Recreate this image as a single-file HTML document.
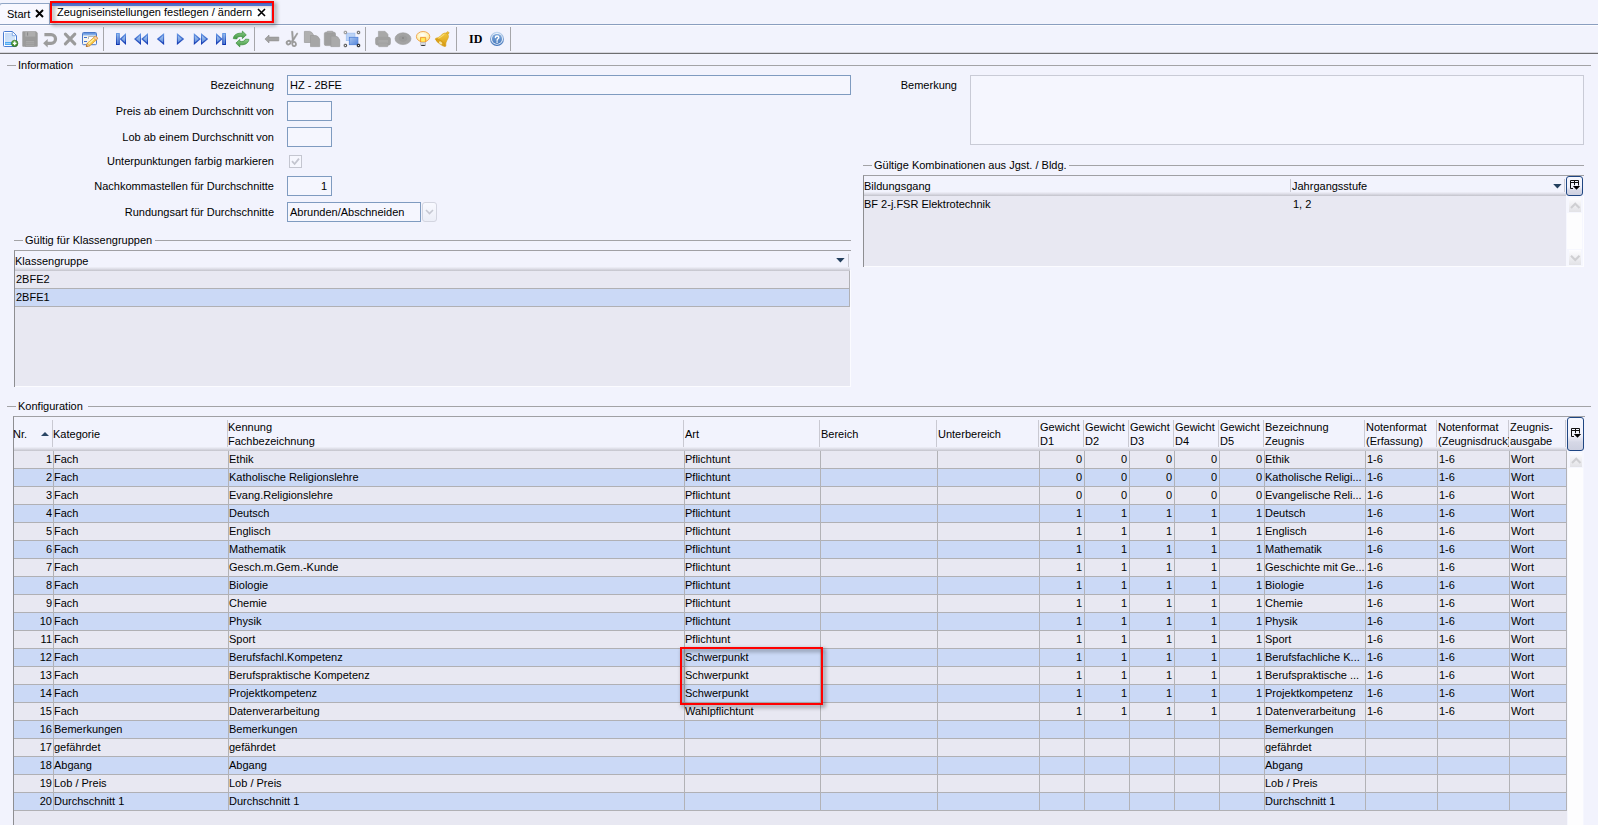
<!DOCTYPE html><html lang="de"><head><meta charset="utf-8"><title>Zeugniseinstellungen festlegen / ändern</title><style>
*{box-sizing:border-box;margin:0;padding:0}
html,body{width:1598px;height:825px;overflow:hidden;background:#f2f3fd}
body{position:relative;font-family:"Liberation Sans",sans-serif;font-size:11px;color:#000;line-height:14px}
.a{position:absolute}
.t{position:absolute;white-space:nowrap;height:14px;line-height:14px}
.r{text-align:right}
.hl{position:absolute;height:1px;background:#a3a3a6}
.vl{position:absolute;width:1px;background:#b2b2b6}
.inp{position:absolute;border:1px solid #7f9bc0;background:#f5f6fe}
.grid{position:absolute;background:#e8e8f2}
.row{position:absolute;left:0;height:18px;border-bottom:1px solid #b0b0b4}
.alt{background:#cbd9f6}

.hs{position:absolute;width:1px;background:#c9c9d2}
.redbox{position:absolute;border:2px solid #ff0000;filter:drop-shadow(2px 2px 2px rgba(0,0,0,.55))}
.grp{position:absolute;background:#f2f3fd;padding:0 2px;height:14px;line-height:14px;white-space:nowrap}
svg{position:absolute;overflow:visible}
</style></head><body>
<!--TABS-->
<div class="a" style="left:0;top:24px;width:1598px;height:1px;background:#8a9ebf"></div>
<div class="a" style="left:0;top:25px;width:1598px;height:1px;background:#fcfcff"></div>
<div class="a" style="left:-1px;top:3px;width:51px;height:21px;border:1px solid #8fa5c6;border-bottom:none;border-radius:3px 0 0 0;background:#f8f8ff"></div>
<div class="t " style="left:7px;top:7px;">Start</div>
<svg style="left:35px;top:9px" width="9" height="9" viewBox="0 0 9 9"><path d="M1 1L8 8M8 1L1 8" stroke="#000" stroke-width="1.9" fill="none"/></svg>
<div class="a" style="left:52px;top:3px;width:220px;height:18px;background:#fff"></div>
<div class="t " style="left:57px;top:5px;">Zeugniseinstellungen festlegen / ändern</div>
<svg style="left:257px;top:8px" width="9" height="9" viewBox="0 0 9 9"><path d="M1 1L8 8M8 1L1 8" stroke="#000" stroke-width="1.6" fill="none"/></svg>
<div class="redbox" style="left:50px;top:1px;width:224px;height:22px"></div>
<div class="a" style="left:271px;top:6px;width:1px;height:15px;background:#b4cbe8"></div>
<div class="a" style="left:52px;top:3px;width:220px;height:3px;background:linear-gradient(#4665ba 0,#4665ba 33%,#5274cc 34%,#5577ce 100%)"></div>
<!--TOOLBAR-->
<div class="a" style="left:0;top:53px;width:1598px;height:1px;background:#6e6e70"></div>
<div class="a" style="left:0;top:52px;width:1598px;height:1px;background:#d6d6de"></div>
<div class="a" style="left:103px;top:27px;width:1px;height:24px;background:#a6a6aa"></div>
<div class="a" style="left:254px;top:27px;width:1px;height:24px;background:#a6a6aa"></div>
<div class="a" style="left:365px;top:27px;width:1px;height:24px;background:#a6a6aa"></div>
<div class="a" style="left:456px;top:27px;width:1px;height:24px;background:#a6a6aa"></div>
<div class="a" style="left:510px;top:27px;width:1px;height:24px;background:#a6a6aa"></div>
<svg style="left:0;top:0" width="520" height="54" viewBox="0 0 520 54"><defs><linearGradient id="gb" x1="0" y1="0" x2="0" y2="1"><stop offset="0" stop-color="#6b9ee8"/><stop offset="1" stop-color="#0a2fae"/></linearGradient><linearGradient id="gbi" x1="0" y1="0" x2="0" y2="1"><stop offset="0" stop-color="#a9c9f1"/><stop offset="1" stop-color="#6e9ce0"/></linearGradient><linearGradient id="gpg" x1="0" y1="0" x2="1" y2="1"><stop offset="0" stop-color="#c3d9f6"/><stop offset="1" stop-color="#dcebfb"/></linearGradient><radialGradient id="ggr" cx=".4" cy=".35" r=".7"><stop offset="0" stop-color="#7fc46a"/><stop offset="1" stop-color="#2f7a1e"/></radialGradient><linearGradient id="ggn" x1="0" y1="0" x2="0" y2="1"><stop offset="0" stop-color="#8fd08c"/><stop offset="1" stop-color="#3f9640"/></linearGradient><linearGradient id="gtl" x1="0" y1="0" x2="0" y2="1"><stop offset="0" stop-color="#5f8fdc"/><stop offset="1" stop-color="#9fc2f0"/></linearGradient><linearGradient id="gsq" x1="0" y1="0" x2="1" y2="1"><stop offset="0" stop-color="#a9c6f1"/><stop offset="1" stop-color="#5585da"/></linearGradient><radialGradient id="gbu" cx=".45" cy=".35" r=".65"><stop offset="0" stop-color="#ffffff"/><stop offset=".6" stop-color="#fff3b8"/><stop offset="1" stop-color="#ffd878"/></radialGradient><linearGradient id="gbl" x1="0" y1="0" x2="1" y2="1"><stop offset="0" stop-color="#f7d24a"/><stop offset="1" stop-color="#d99a12"/></linearGradient><linearGradient id="ghp" x1="0" y1="0" x2="0" y2="1"><stop offset="0" stop-color="#7fa8da"/><stop offset="1" stop-color="#4b7dc0"/></linearGradient><linearGradient id="gpn" x1="0" y1="0" x2="1" y2="1"><stop offset="0" stop-color="#fff27a"/><stop offset="1" stop-color="#f2b530"/></linearGradient><linearGradient id="ghr" x1="0" y1="0" x2="0" y2="1"><stop offset="0" stop-color="#c0d6f0"/><stop offset="1" stop-color="#3f73ba"/></linearGradient></defs><path d="M4.5 31.5H12.5L16.5 35.5V45.5Q16.5 46.5 15.5 46.5H4.5Q3.5 46.5 3.5 45.5V32.5Q3.5 31.5 4.5 31.5Z" fill="#fbfdff" stroke="#4a7dd2" stroke-width="1"/><path d="M5 33H12L15 36V45H5Z" fill="url(#gpg)"/><path d="M12.3 31.8V35.7H16.2" fill="#f4f9ff" stroke="#6f9be0" stroke-width=".8"/><rect x="5" y="42" width="7" height="3" fill="#4fa9f2"/><rect x="5.5" y="43" width="5" height="1" fill="#9fd2fa"/><circle cx="14.7" cy="43.4" r="3.2" fill="url(#ggr)" stroke="#2c6d18" stroke-width=".6"/><path d="M12.9 43.4H16.5M14.7 41.6V45.2" stroke="#fff" stroke-width="1.3"/><path d="M23 31.3H36L37.7 33V46Q37.7 46.7 37 46.7H23Q22.3 46.7 22.3 46V32Q22.3 31.3 23 31.3Z" fill="#9b9b9b"/><rect x="25.3" y="31.6" width="10" height="5" fill="#aeaeae"/><rect x="27" y="32.4" width="1.1" height="3.2" fill="#8a8a8a"/><rect x="25.3" y="40.8" width="9.4" height="5.4" fill="#a9a9a9" stroke="#939393" stroke-width=".5"/><path d="M26 42.8H34M26 44.6H34" stroke="#989898" stroke-width=".7"/><path d="M44.4 34.6H51.1A4.4 4.4 0 0 1 51.1 43.4H47" fill="none" stroke="#9c9c9c" stroke-width="3.3"/><path d="M43.1 43.3L47.7 38.9V47.6Z" fill="#9c9c9c"/><path d="M65.4 34.2L74.8 43.8M74.8 34.2L65.4 43.8" stroke="#9b9b9b" stroke-width="3.1" stroke-linecap="round"/><rect x="82.5" y="32.5" width="14" height="12.2" rx="1" fill="#f6f4ec" stroke="#4a78c8" stroke-width="1"/><rect x="83" y="33" width="13" height="2.6" fill="url(#gtl)"/><path d="M84 37.5H87M84 41.5H87" stroke="#3f6fd0" stroke-width="1.1"/><path d="M88.5 39V36.5H95" fill="none" stroke="#a8a8a8" stroke-width=".8"/><rect x="89" y="37" width="6.5" height="6" fill="#fdfdfd"/><g transform="translate(86.3 46.5) rotate(-41.5) scale(.94)"><path d="M0 0L3.2 -1.9H13.6Q15 -1.9 15 0Q15 1.9 13.6 1.9H3.2Z" fill="url(#gpn)" stroke="#d88a1c" stroke-width=".7"/><path d="M0 0L3.2 -1.9V1.9Z" fill="#f3cfa0" stroke="#c77a20" stroke-width=".5"/><path d="M0 0L1.3 -.8V.8Z" fill="#4a2a08"/><path d="M12.2 -1.9H13.6Q15 -1.9 15 0Q15 1.9 13.6 1.9H12.2Z" fill="#f7c9b0" stroke="#d88a1c" stroke-width=".5"/><path d="M3.5 -.6H12" stroke="#fffbd0" stroke-width=".9"/></g><rect x="116" y="33" width="3.8" height="12" fill="url(#gb)"/><rect x="117" y="34" width="1.7" height="10" fill="url(#gbi)" opacity=".7"/><path d="M119.6 39L126 33V45Z" fill="url(#gb)"/><path d="M121.6 39L125 35.8V42.2Z" fill="url(#gbi)" opacity=".9"/><path d="M134 39L141 33V45Z" fill="url(#gb)"/><path d="M136 39L140 35.6V42.4Z" fill="url(#gbi)" opacity=".9"/><path d="M141.2 39L148 33V45Z" fill="url(#gb)"/><path d="M143.2 39L147 35.6V42.4Z" fill="url(#gbi)" opacity=".9"/><path d="M156.8 39L164.1 33V45Z" fill="url(#gb)"/><path d="M158.9 39L163.1 35.5V42.5Z" fill="url(#gbi)" opacity=".9"/><path d="M184.2 39L176.9 33V45Z" fill="url(#gb)"/><path d="M182 39L177.9 35.5V42.5Z" fill="url(#gbi)" opacity=".9"/><path d="M200.8 39L193.8 33V45Z" fill="url(#gb)"/><path d="M198.8 39L194.8 35.6V42.4Z" fill="url(#gbi)" opacity=".9"/><path d="M208.2 39L201 33V45Z" fill="url(#gb)"/><path d="M206.2 39L202 35.6V42.4Z" fill="url(#gbi)" opacity=".9"/><path d="M222.6 39L216 33V45Z" fill="url(#gb)"/><path d="M220.6 39L217 35.8V42.2Z" fill="url(#gbi)" opacity=".9"/><rect x="222.2" y="33" width="3.8" height="12" fill="url(#gb)"/><rect x="223.3" y="34" width="1.7" height="10" fill="url(#gbi)" opacity=".7"/><path d="M233.3 38.6C233.6 35 237 33.2 240.5 33.2H242.4V31.1L246.3 34.9L242.4 38.6V36.5H240.5C238.6 36.5 237.3 37.2 236.8 38.9Z" fill="url(#ggn)" stroke="#3a8c3a" stroke-width=".7" stroke-linejoin="round"/><path d="M248.9 39.4C248.6 43 245.2 44.8 241.7 44.8H239.8V46.9L235.9 43.1L239.8 39.4V41.5H241.7C243.6 41.5 244.9 40.8 245.4 39.1Z" fill="url(#ggn)" stroke="#3a8c3a" stroke-width=".7" stroke-linejoin="round"/><path d="M264.9 39L269 35V37.1H278.8V40.9H269V43Z" fill="#a2a2a2" stroke="#8f8f8f" stroke-width=".6" stroke-linejoin="round"/><path d="M291.4 31.3H293L293.6 41.5H292.2ZM297 32.8L298 33.6L292.6 42.4L291 41.6Z" fill="#9b9b9b" stroke="#9b9b9b" stroke-width=".4" stroke-linejoin="round"/><ellipse cx="288.6" cy="42.6" rx="2" ry="1.7" transform="rotate(-35 288.6 42.6)" fill="none" stroke="#9b9b9b" stroke-width="1.8"/><ellipse cx="294.1" cy="44" rx="1.8" ry="2.1" transform="rotate(-10 294.1 44)" fill="none" stroke="#9b9b9b" stroke-width="1.8"/><path d="M304.4 31.4H309.79999999999995Q312.4 32.0 313.59999999999997 35.199999999999996V42.5H304.4Z" fill="#b0b0b0" stroke="#999" stroke-width=".7" stroke-linejoin="round"/><path d="M310.5 35.5H315.9Q318.5 36.1 319.7 39.3V46.6H310.5Z" fill="#a6a6a6" stroke="#999" stroke-width=".7" stroke-linejoin="round"/><rect x="324.3" y="32.2" width="11.2" height="13.4" rx="1.6" fill="#9f9f9f" stroke="#979797" stroke-width=".6"/><rect x="327" y="31.2" width="6" height="2.4" rx=".8" fill="#a9a9a9" stroke="#979797" stroke-width=".5"/><path d="M330.9 36.1H335.9Q338.5 36.7 339.7 39.9V46.6H330.9Z" fill="#aaaaaa" stroke="#999" stroke-width=".7" stroke-linejoin="round"/><rect x="346.3" y="33.2" width="8.6" height="7.4" fill="#bcd3f5" stroke="#9fc0f2" stroke-width=".8"/><rect x="349.3" y="37.3" width="8.6" height="7.4" fill="url(#gsq)" stroke="#4f80d8" stroke-width=".8"/><rect x="344.2" y="31.3" width="2.4" height="2.4" rx=".5" fill="#f4f4f4" stroke="#8c8c8c" stroke-width="1"/><rect x="357.3" y="31.3" width="2.4" height="2.4" rx=".5" fill="#f4f4f4" stroke="#5a5a5a" stroke-width="1"/><rect x="344.2" y="44.3" width="2.4" height="2.4" rx=".5" fill="#f4f4f4" stroke="#454545" stroke-width="1"/><rect x="357.3" y="44.3" width="2.4" height="2.4" rx=".5" fill="#f4f4f4" stroke="#050505" stroke-width="1"/><path d="M378.4 31.3H385L388 34.3V38H378.4Z" fill="#a8a8a8" stroke="#9a9a9a" stroke-width=".5"/><rect x="375.2" y="36.8" width="15.6" height="8.6" rx="2.6" fill="#a0a0a0"/><rect x="378.4" y="40" width="9.6" height="3" fill="#a9a9a9"/><rect x="378.4" y="43" width="9.6" height="3.7" rx=".8" fill="#a6a6a6" stroke="#999" stroke-width=".4"/><ellipse cx="403" cy="38.7" rx="8" ry="5.9" fill="#a3a3a3" stroke="#9a9a9a" stroke-width=".6"/><ellipse cx="403" cy="38.6" rx="4.2" ry="3.1" fill="#9c9c9c"/><circle cx="403" cy="38" r=".9" fill="#858585"/><ellipse cx="423.1" cy="36.7" rx="6.7" ry="5.2" fill="url(#gbu)" stroke="#eea04a" stroke-width=".9"/><path d="M420.5 37.4H425.7V42H420.5Z" fill="#ffd83a" stroke="#f08e2c" stroke-width=".8"/><rect x="421.4" y="38.2" width="3.4" height="3.2" fill="#ffee62"/><path d="M420.2 42.2H426V44.8Q426 46 423.1 46Q420.2 46 420.2 44.8Z" fill="#b9bcc2"/><rect x="421" y="43.3" width="4.2" height="1.2" fill="#e9eaee"/><path d="M420.6 45H425.6Q425.4 46.1 423.1 46.1Q420.8 46.1 420.6 45Z" fill="#2e2e2e"/><g transform="translate(443.3 38.8) rotate(37) scale(.92)"><path d="M0 -6.9C-2.7 -6.9 -3.7 -4.7 -4 -2.4C-4.3 .4 -4.9 2.5 -6.7 4.2C-7.3 4.9 -6.8 5.9 -5.7 5.9H5.7C6.8 5.9 7.3 4.9 6.7 4.2C4.9 2.5 4.3 .4 4 -2.4C3.7 -4.7 2.7 -6.9 0 -6.9Z" fill="url(#gbl)" stroke="#d9a018" stroke-width=".6"/><circle cx="0" cy="-8" r="1.3" fill="#f0c63c" stroke="#cf9612" stroke-width=".6"/><ellipse cx="0" cy="5" rx="6" ry="1.9" fill="#dca41c" stroke="#c98e14" stroke-width=".4"/><ellipse cx="0.3" cy="5.3" rx="2" ry="1.3" fill="#f7e6a6"/><path d="M-2.2 -4.6C-2.6 -1.6 -3.2 .8 -4.8 2.8" stroke="#fbe27e" stroke-width="1.2" fill="none" opacity=".85"/></g><circle cx="497" cy="38.9" r="6.5" fill="#eef3fb" stroke="url(#ghr)" stroke-width="1.1"/><circle cx="497" cy="38.9" r="5" fill="url(#ghp)"/><path d="M495.4 37.5C495.4 35.6 498.8 35.6 498.8 37.5C498.8 38.7 497.1 38.7 497.1 40.2" fill="none" stroke="#fff" stroke-width="1.4" stroke-linecap="round"/><circle cx="497.1" cy="42" r=".85" fill="#fff"/></svg>
<div class="t " style="left:469px;top:32px;font-family:'Liberation Serif',serif;font-weight:bold;font-size:12px">ID</div>
<!--INFO-->
<div class="hl" style="left:7px;top:65px;width:1584px"></div>
<div class="grp" style="left:16px;top:58px;width:64px">Information</div>
<div class="t r " style="right:1324px;top:78px;">Bezeichnung</div>
<div class="t r " style="right:1324px;top:104px;">Preis ab einem Durchschnitt von</div>
<div class="t r " style="right:1324px;top:130px;">Lob ab einem Durchschnitt von</div>
<div class="t r " style="right:1324px;top:154px;">Unterpunktungen farbig markieren</div>
<div class="t r " style="right:1324px;top:179px;">Nachkommastellen für Durchschnitte</div>
<div class="t r " style="right:1324px;top:205px;">Rundungsart für Durchschnitte</div>
<div class="inp" style="left:287px;top:75px;width:564px;height:20px"></div>
<div class="t " style="left:290px;top:78px;">HZ - 2BFE</div>
<div class="inp" style="left:287px;top:101px;width:45px;height:20px"></div>
<div class="inp" style="left:287px;top:127px;width:45px;height:20px"></div>
<div class="a" style="left:289px;top:155px;width:13px;height:13px;border:1px solid #c4c6d0;background:#f6f7fe"></div>
<svg style="left:291px;top:157px" width="9" height="9" viewBox="0 0 9 9"><path d="M1 4.2L3.6 7L8 1.6" stroke="#c3c5cf" stroke-width="1.8" fill="none"/></svg>
<div class="inp" style="left:287px;top:176px;width:45px;height:20px"></div>
<div class="t r " style="right:1271px;top:179px;">1</div>
<div class="inp" style="left:287px;top:202px;width:134px;height:20px"></div>
<div class="t " style="left:290px;top:205px;">Abrunden/Abschneiden</div>
<div class="a" style="left:422px;top:202px;width:15px;height:20px;border:1px solid #d3d5e0;border-radius:3px;background:linear-gradient(#f8f9ff,#eceef7)"></div>
<svg style="left:425px;top:209px" width="9" height="6" viewBox="0 0 9 6"><path d="M1 1L4.5 4.5L8 1" stroke="#c6c8d2" stroke-width="1.6" fill="none"/></svg>
<div class="t r " style="right:641px;top:78px;">Bemerkung</div>
<div class="a" style="left:970px;top:75px;width:614px;height:70px;border:1px solid #c9cbd6;background:#f5f6fe"></div>
<!--KG-->
<div class="hl" style="left:14px;top:240px;width:837px"></div>
<div class="grp" style="left:23px;top:233px;width:132px">Gültig für Klassengruppen</div>
<div class="a" style="left:14px;top:250px;width:837px;height:137px;border-left:1px solid #8e8e92;border-top:1px solid #a0a0a4"></div>
<div class="grid" style="left:15px;top:271px;width:835px;height:115px"></div>
<div class="a" style="left:15px;top:386px;width:836px;height:1px;background:#fbfbff"></div>
<div class="a" style="left:850px;top:270px;width:1px;height:117px;background:#fbfbff"></div>
<div class="a" style="left:15px;top:267px;width:835px;height:4px;background:linear-gradient(#eff0f9,#dedee8 45%,#c2c2ca)"></div>
<div class="t " style="left:15px;top:254px;">Klassengruppe</div>
<div class="row" style="left:15px;top:271px;width:835px;height:18px;border-right:1px solid #b0b0b4"></div>
<div class="row alt" style="left:15px;top:289px;width:835px;height:18px;border-right:1px solid #b0b0b4"></div>
<div class="t " style="left:16px;top:272px;">2BFE2</div>
<div class="t " style="left:16px;top:290px;">2BFE1</div>
<svg style="left:836px;top:258px" width="9" height="5" viewBox="0 0 9 5"><path d="M0.2 0H8.6L4.4 4.4Z" fill="#24405e"/></svg>
<div class="hs" style="left:848px;top:254px;height:13px"></div>
<!--KOMB-->
<div class="hl" style="left:863px;top:165px;width:721px"></div>
<div class="grp" style="left:872px;top:158px;width:197px">Gültige Kombinationen aus Jgst. / Bldg.</div>
<div class="a" style="left:863px;top:175px;width:721px;height:92px;border-left:1px solid #8e8e92;border-top:1px solid #a0a0a4"></div>
<div class="grid" style="left:864px;top:196px;width:702px;height:70px"></div>
<div class="a" style="left:864px;top:192px;width:702px;height:4px;background:linear-gradient(#eff0f9,#dedee8 45%,#c2c2ca)"></div>
<div class="a" style="left:864px;top:266px;width:720px;height:1px;background:#fbfbff"></div>
<div class="t " style="left:864px;top:179px;">Bildungsgang</div>
<div class="t " style="left:1292px;top:179px;">Jahrgangsstufe</div>
<div class="hs" style="left:1290px;top:179px;height:13px"></div>
<div class="t " style="left:864px;top:197px;">BF 2-j.FSR Elektrotechnik</div>
<div class="t " style="left:1293px;top:197px;">1, 2</div>
<svg style="left:1553px;top:184px" width="9" height="5" viewBox="0 0 9 5"><path d="M0.2 0H8.6L4.4 4.4Z" fill="#24405e"/></svg>
<div class="hs" style="left:1564px;top:179px;height:13px"></div>
<div class="a" style="left:1566px;top:196px;width:18px;height:71px;background:#f6f7fe;border-right:1px solid #fdfdff;border-bottom:1px solid #fdfdff"></div>
<div class="a" style="left:1567px;top:213px;width:15px;height:36px;background:#fdfdfe"></div>
<div class="a" style="left:1566px;top:176px;width:17px;height:20px;border:1px solid #1f4682;border-radius:3px;background:linear-gradient(#f6f7fe 0%,#f1f2fb 55%,#d6d8e6 75%,#cdd0e0 100%)"></div>
<svg style="left:1570px;top:180px" width="11" height="10" viewBox="0 0 11 10"><path d="M3 8.5H0.5V0.5H8.5V5.5M0.5 2.5H8.5M4.5 0.5V5.2" fill="none" stroke="#111" stroke-width="1"/><path d="M2.8 6H10.2L6.5 9.7Z" fill="#000"/></svg>
<div class="a" style="left:1569px;top:198px;width:12px;height:14px;background:linear-gradient(#fdfdff,#e2e2e6)"></div>
<svg style="left:1570px;top:202px" width="11" height="8" viewBox="0 0 11 8"><path d="M1 6L5.25 1.7L9.5 6" fill="none" stroke="#cfcfd2" stroke-width="2.1"/></svg>
<div class="a" style="left:1569px;top:250px;width:12px;height:15px;background:linear-gradient(#fdfdff,#e2e2e6)"></div>
<svg style="left:1570px;top:254px" width="11" height="8" viewBox="0 0 11 8"><path d="M1 1.7L5.25 6L9.5 1.7" fill="none" stroke="#cfcfd2" stroke-width="2.1"/></svg>
<!--KONF-->
<div class="hl" style="left:7px;top:406px;width:1584px"></div>
<div class="grp" style="left:16px;top:399px;width:72px">Konfiguration</div>
<div class="a" style="left:13px;top:416px;width:1572px;height:409px;border-left:1px solid #8e8e92;border-top:1px solid #a0a0a4"></div>
<div class="grid" style="left:14px;top:451px;width:1553px;height:374px"></div>
<div class="a" style="left:14px;top:447px;width:1553px;height:4px;background:linear-gradient(#eff0f9,#dedee8 45%,#c2c2ca)"></div>
<div class="a" style="left:1567px;top:451px;width:17px;height:374px;background:#f6f7fe"></div>
<div class="a" style="left:1568px;top:468px;width:15px;height:357px;background:#fdfdfe"></div>
<div class="hs" style="left:52px;top:420px;height:27px"></div>
<div class="hs" style="left:227px;top:420px;height:27px"></div>
<div class="hs" style="left:683px;top:420px;height:27px"></div>
<div class="hs" style="left:819px;top:420px;height:27px"></div>
<div class="hs" style="left:936px;top:420px;height:27px"></div>
<div class="hs" style="left:1038px;top:420px;height:27px"></div>
<div class="hs" style="left:1083px;top:420px;height:27px"></div>
<div class="hs" style="left:1128px;top:420px;height:27px"></div>
<div class="hs" style="left:1173px;top:420px;height:27px"></div>
<div class="hs" style="left:1218px;top:420px;height:27px"></div>
<div class="hs" style="left:1263px;top:420px;height:27px"></div>
<div class="hs" style="left:1364px;top:420px;height:27px"></div>
<div class="hs" style="left:1436px;top:420px;height:27px"></div>
<div class="hs" style="left:1508px;top:420px;height:27px"></div>
<div class="hs" style="left:1565px;top:420px;height:27px"></div>
<div class="row" style="left:14px;top:451px;width:1552px;height:18px"></div>
<div class="row alt" style="left:14px;top:469px;width:1552px;height:18px"></div>
<div class="row" style="left:14px;top:487px;width:1552px;height:18px"></div>
<div class="row alt" style="left:14px;top:505px;width:1552px;height:18px"></div>
<div class="row" style="left:14px;top:523px;width:1552px;height:18px"></div>
<div class="row alt" style="left:14px;top:541px;width:1552px;height:18px"></div>
<div class="row" style="left:14px;top:559px;width:1552px;height:18px"></div>
<div class="row alt" style="left:14px;top:577px;width:1552px;height:18px"></div>
<div class="row" style="left:14px;top:595px;width:1552px;height:18px"></div>
<div class="row alt" style="left:14px;top:613px;width:1552px;height:18px"></div>
<div class="row" style="left:14px;top:631px;width:1552px;height:18px"></div>
<div class="row alt" style="left:14px;top:649px;width:1552px;height:18px"></div>
<div class="row" style="left:14px;top:667px;width:1552px;height:18px"></div>
<div class="row alt" style="left:14px;top:685px;width:1552px;height:18px"></div>
<div class="row" style="left:14px;top:703px;width:1552px;height:18px"></div>
<div class="row alt" style="left:14px;top:721px;width:1552px;height:18px"></div>
<div class="row" style="left:14px;top:739px;width:1552px;height:18px"></div>
<div class="row alt" style="left:14px;top:757px;width:1552px;height:18px"></div>
<div class="row" style="left:14px;top:775px;width:1552px;height:18px"></div>
<div class="row alt" style="left:14px;top:793px;width:1552px;height:18px"></div>
<div class="vl" style="left:53px;top:451px;height:360px"></div>
<div class="vl" style="left:228px;top:451px;height:360px"></div>
<div class="vl" style="left:684px;top:451px;height:360px"></div>
<div class="vl" style="left:820px;top:451px;height:360px"></div>
<div class="vl" style="left:937px;top:451px;height:360px"></div>
<div class="vl" style="left:1039px;top:451px;height:360px"></div>
<div class="vl" style="left:1084px;top:451px;height:360px"></div>
<div class="vl" style="left:1129px;top:451px;height:360px"></div>
<div class="vl" style="left:1174px;top:451px;height:360px"></div>
<div class="vl" style="left:1219px;top:451px;height:360px"></div>
<div class="vl" style="left:1264px;top:451px;height:360px"></div>
<div class="vl" style="left:1365px;top:451px;height:360px"></div>
<div class="vl" style="left:1437px;top:451px;height:360px"></div>
<div class="vl" style="left:1509px;top:451px;height:360px"></div>
<div class="vl" style="left:1566px;top:451px;height:360px"></div>
<div class="t r " style="right:1546px;top:452px;">1</div>
<div class="t " style="left:54px;top:452px;">Fach</div>
<div class="t " style="left:229px;top:452px;">Ethik</div>
<div class="t " style="left:685px;top:452px;">Pflichtunt</div>
<div class="t r " style="right:516px;top:452px;">0</div>
<div class="t r " style="right:471px;top:452px;">0</div>
<div class="t r " style="right:426px;top:452px;">0</div>
<div class="t r " style="right:381px;top:452px;">0</div>
<div class="t r " style="right:336px;top:452px;">0</div>
<div class="t " style="left:1265px;top:452px;">Ethik</div>
<div class="t " style="left:1367px;top:452px;">1-6</div>
<div class="t " style="left:1439px;top:452px;">1-6</div>
<div class="t " style="left:1511px;top:452px;">Wort</div>
<div class="t r " style="right:1546px;top:470px;">2</div>
<div class="t " style="left:54px;top:470px;">Fach</div>
<div class="t " style="left:229px;top:470px;">Katholische Religionslehre</div>
<div class="t " style="left:685px;top:470px;">Pflichtunt</div>
<div class="t r " style="right:516px;top:470px;">0</div>
<div class="t r " style="right:471px;top:470px;">0</div>
<div class="t r " style="right:426px;top:470px;">0</div>
<div class="t r " style="right:381px;top:470px;">0</div>
<div class="t r " style="right:336px;top:470px;">0</div>
<div class="t " style="left:1265px;top:470px;">Katholische Religi...</div>
<div class="t " style="left:1367px;top:470px;">1-6</div>
<div class="t " style="left:1439px;top:470px;">1-6</div>
<div class="t " style="left:1511px;top:470px;">Wort</div>
<div class="t r " style="right:1546px;top:488px;">3</div>
<div class="t " style="left:54px;top:488px;">Fach</div>
<div class="t " style="left:229px;top:488px;">Evang.Religionslehre</div>
<div class="t " style="left:685px;top:488px;">Pflichtunt</div>
<div class="t r " style="right:516px;top:488px;">0</div>
<div class="t r " style="right:471px;top:488px;">0</div>
<div class="t r " style="right:426px;top:488px;">0</div>
<div class="t r " style="right:381px;top:488px;">0</div>
<div class="t r " style="right:336px;top:488px;">0</div>
<div class="t " style="left:1265px;top:488px;">Evangelische Reli...</div>
<div class="t " style="left:1367px;top:488px;">1-6</div>
<div class="t " style="left:1439px;top:488px;">1-6</div>
<div class="t " style="left:1511px;top:488px;">Wort</div>
<div class="t r " style="right:1546px;top:506px;">4</div>
<div class="t " style="left:54px;top:506px;">Fach</div>
<div class="t " style="left:229px;top:506px;">Deutsch</div>
<div class="t " style="left:685px;top:506px;">Pflichtunt</div>
<div class="t r " style="right:516px;top:506px;">1</div>
<div class="t r " style="right:471px;top:506px;">1</div>
<div class="t r " style="right:426px;top:506px;">1</div>
<div class="t r " style="right:381px;top:506px;">1</div>
<div class="t r " style="right:336px;top:506px;">1</div>
<div class="t " style="left:1265px;top:506px;">Deutsch</div>
<div class="t " style="left:1367px;top:506px;">1-6</div>
<div class="t " style="left:1439px;top:506px;">1-6</div>
<div class="t " style="left:1511px;top:506px;">Wort</div>
<div class="t r " style="right:1546px;top:524px;">5</div>
<div class="t " style="left:54px;top:524px;">Fach</div>
<div class="t " style="left:229px;top:524px;">Englisch</div>
<div class="t " style="left:685px;top:524px;">Pflichtunt</div>
<div class="t r " style="right:516px;top:524px;">1</div>
<div class="t r " style="right:471px;top:524px;">1</div>
<div class="t r " style="right:426px;top:524px;">1</div>
<div class="t r " style="right:381px;top:524px;">1</div>
<div class="t r " style="right:336px;top:524px;">1</div>
<div class="t " style="left:1265px;top:524px;">Englisch</div>
<div class="t " style="left:1367px;top:524px;">1-6</div>
<div class="t " style="left:1439px;top:524px;">1-6</div>
<div class="t " style="left:1511px;top:524px;">Wort</div>
<div class="t r " style="right:1546px;top:542px;">6</div>
<div class="t " style="left:54px;top:542px;">Fach</div>
<div class="t " style="left:229px;top:542px;">Mathematik</div>
<div class="t " style="left:685px;top:542px;">Pflichtunt</div>
<div class="t r " style="right:516px;top:542px;">1</div>
<div class="t r " style="right:471px;top:542px;">1</div>
<div class="t r " style="right:426px;top:542px;">1</div>
<div class="t r " style="right:381px;top:542px;">1</div>
<div class="t r " style="right:336px;top:542px;">1</div>
<div class="t " style="left:1265px;top:542px;">Mathematik</div>
<div class="t " style="left:1367px;top:542px;">1-6</div>
<div class="t " style="left:1439px;top:542px;">1-6</div>
<div class="t " style="left:1511px;top:542px;">Wort</div>
<div class="t r " style="right:1546px;top:560px;">7</div>
<div class="t " style="left:54px;top:560px;">Fach</div>
<div class="t " style="left:229px;top:560px;">Gesch.m.Gem.-Kunde</div>
<div class="t " style="left:685px;top:560px;">Pflichtunt</div>
<div class="t r " style="right:516px;top:560px;">1</div>
<div class="t r " style="right:471px;top:560px;">1</div>
<div class="t r " style="right:426px;top:560px;">1</div>
<div class="t r " style="right:381px;top:560px;">1</div>
<div class="t r " style="right:336px;top:560px;">1</div>
<div class="t " style="left:1265px;top:560px;">Geschichte mit Ge...</div>
<div class="t " style="left:1367px;top:560px;">1-6</div>
<div class="t " style="left:1439px;top:560px;">1-6</div>
<div class="t " style="left:1511px;top:560px;">Wort</div>
<div class="t r " style="right:1546px;top:578px;">8</div>
<div class="t " style="left:54px;top:578px;">Fach</div>
<div class="t " style="left:229px;top:578px;">Biologie</div>
<div class="t " style="left:685px;top:578px;">Pflichtunt</div>
<div class="t r " style="right:516px;top:578px;">1</div>
<div class="t r " style="right:471px;top:578px;">1</div>
<div class="t r " style="right:426px;top:578px;">1</div>
<div class="t r " style="right:381px;top:578px;">1</div>
<div class="t r " style="right:336px;top:578px;">1</div>
<div class="t " style="left:1265px;top:578px;">Biologie</div>
<div class="t " style="left:1367px;top:578px;">1-6</div>
<div class="t " style="left:1439px;top:578px;">1-6</div>
<div class="t " style="left:1511px;top:578px;">Wort</div>
<div class="t r " style="right:1546px;top:596px;">9</div>
<div class="t " style="left:54px;top:596px;">Fach</div>
<div class="t " style="left:229px;top:596px;">Chemie</div>
<div class="t " style="left:685px;top:596px;">Pflichtunt</div>
<div class="t r " style="right:516px;top:596px;">1</div>
<div class="t r " style="right:471px;top:596px;">1</div>
<div class="t r " style="right:426px;top:596px;">1</div>
<div class="t r " style="right:381px;top:596px;">1</div>
<div class="t r " style="right:336px;top:596px;">1</div>
<div class="t " style="left:1265px;top:596px;">Chemie</div>
<div class="t " style="left:1367px;top:596px;">1-6</div>
<div class="t " style="left:1439px;top:596px;">1-6</div>
<div class="t " style="left:1511px;top:596px;">Wort</div>
<div class="t r " style="right:1546px;top:614px;">10</div>
<div class="t " style="left:54px;top:614px;">Fach</div>
<div class="t " style="left:229px;top:614px;">Physik</div>
<div class="t " style="left:685px;top:614px;">Pflichtunt</div>
<div class="t r " style="right:516px;top:614px;">1</div>
<div class="t r " style="right:471px;top:614px;">1</div>
<div class="t r " style="right:426px;top:614px;">1</div>
<div class="t r " style="right:381px;top:614px;">1</div>
<div class="t r " style="right:336px;top:614px;">1</div>
<div class="t " style="left:1265px;top:614px;">Physik</div>
<div class="t " style="left:1367px;top:614px;">1-6</div>
<div class="t " style="left:1439px;top:614px;">1-6</div>
<div class="t " style="left:1511px;top:614px;">Wort</div>
<div class="t r " style="right:1546px;top:632px;">11</div>
<div class="t " style="left:54px;top:632px;">Fach</div>
<div class="t " style="left:229px;top:632px;">Sport</div>
<div class="t " style="left:685px;top:632px;">Pflichtunt</div>
<div class="t r " style="right:516px;top:632px;">1</div>
<div class="t r " style="right:471px;top:632px;">1</div>
<div class="t r " style="right:426px;top:632px;">1</div>
<div class="t r " style="right:381px;top:632px;">1</div>
<div class="t r " style="right:336px;top:632px;">1</div>
<div class="t " style="left:1265px;top:632px;">Sport</div>
<div class="t " style="left:1367px;top:632px;">1-6</div>
<div class="t " style="left:1439px;top:632px;">1-6</div>
<div class="t " style="left:1511px;top:632px;">Wort</div>
<div class="t r " style="right:1546px;top:650px;">12</div>
<div class="t " style="left:54px;top:650px;">Fach</div>
<div class="t " style="left:229px;top:650px;">Berufsfachl.Kompetenz</div>
<div class="t " style="left:685px;top:650px;">Schwerpunkt</div>
<div class="t r " style="right:516px;top:650px;">1</div>
<div class="t r " style="right:471px;top:650px;">1</div>
<div class="t r " style="right:426px;top:650px;">1</div>
<div class="t r " style="right:381px;top:650px;">1</div>
<div class="t r " style="right:336px;top:650px;">1</div>
<div class="t " style="left:1265px;top:650px;">Berufsfachliche K...</div>
<div class="t " style="left:1367px;top:650px;">1-6</div>
<div class="t " style="left:1439px;top:650px;">1-6</div>
<div class="t " style="left:1511px;top:650px;">Wort</div>
<div class="t r " style="right:1546px;top:668px;">13</div>
<div class="t " style="left:54px;top:668px;">Fach</div>
<div class="t " style="left:229px;top:668px;">Berufspraktische Kompetenz</div>
<div class="t " style="left:685px;top:668px;">Schwerpunkt</div>
<div class="t r " style="right:516px;top:668px;">1</div>
<div class="t r " style="right:471px;top:668px;">1</div>
<div class="t r " style="right:426px;top:668px;">1</div>
<div class="t r " style="right:381px;top:668px;">1</div>
<div class="t r " style="right:336px;top:668px;">1</div>
<div class="t " style="left:1265px;top:668px;">Berufspraktische ...</div>
<div class="t " style="left:1367px;top:668px;">1-6</div>
<div class="t " style="left:1439px;top:668px;">1-6</div>
<div class="t " style="left:1511px;top:668px;">Wort</div>
<div class="t r " style="right:1546px;top:686px;">14</div>
<div class="t " style="left:54px;top:686px;">Fach</div>
<div class="t " style="left:229px;top:686px;">Projektkompetenz</div>
<div class="t " style="left:685px;top:686px;">Schwerpunkt</div>
<div class="t r " style="right:516px;top:686px;">1</div>
<div class="t r " style="right:471px;top:686px;">1</div>
<div class="t r " style="right:426px;top:686px;">1</div>
<div class="t r " style="right:381px;top:686px;">1</div>
<div class="t r " style="right:336px;top:686px;">1</div>
<div class="t " style="left:1265px;top:686px;">Projektkompetenz</div>
<div class="t " style="left:1367px;top:686px;">1-6</div>
<div class="t " style="left:1439px;top:686px;">1-6</div>
<div class="t " style="left:1511px;top:686px;">Wort</div>
<div class="t r " style="right:1546px;top:704px;">15</div>
<div class="t " style="left:54px;top:704px;">Fach</div>
<div class="t " style="left:229px;top:704px;">Datenverarbeitung</div>
<div class="t " style="left:685px;top:704px;">Wahlpflichtunt</div>
<div class="t r " style="right:516px;top:704px;">1</div>
<div class="t r " style="right:471px;top:704px;">1</div>
<div class="t r " style="right:426px;top:704px;">1</div>
<div class="t r " style="right:381px;top:704px;">1</div>
<div class="t r " style="right:336px;top:704px;">1</div>
<div class="t " style="left:1265px;top:704px;">Datenverarbeitung</div>
<div class="t " style="left:1367px;top:704px;">1-6</div>
<div class="t " style="left:1439px;top:704px;">1-6</div>
<div class="t " style="left:1511px;top:704px;">Wort</div>
<div class="t r " style="right:1546px;top:722px;">16</div>
<div class="t " style="left:54px;top:722px;">Bemerkungen</div>
<div class="t " style="left:229px;top:722px;">Bemerkungen</div>
<div class="t " style="left:1265px;top:722px;">Bemerkungen</div>
<div class="t r " style="right:1546px;top:740px;">17</div>
<div class="t " style="left:54px;top:740px;">gefährdet</div>
<div class="t " style="left:229px;top:740px;">gefährdet</div>
<div class="t " style="left:1265px;top:740px;">gefährdet</div>
<div class="t r " style="right:1546px;top:758px;">18</div>
<div class="t " style="left:54px;top:758px;">Abgang</div>
<div class="t " style="left:229px;top:758px;">Abgang</div>
<div class="t " style="left:1265px;top:758px;">Abgang</div>
<div class="t r " style="right:1546px;top:776px;">19</div>
<div class="t " style="left:54px;top:776px;">Lob / Preis</div>
<div class="t " style="left:229px;top:776px;">Lob / Preis</div>
<div class="t " style="left:1265px;top:776px;">Lob / Preis</div>
<div class="t r " style="right:1546px;top:794px;">20</div>
<div class="t " style="left:54px;top:794px;">Durchschnitt 1</div>
<div class="t " style="left:229px;top:794px;">Durchschnitt 1</div>
<div class="t " style="left:1265px;top:794px;">Durchschnitt 1</div>
<div class="t " style="left:13px;top:427px;">Nr.</div>
<div class="t " style="left:53px;top:427px;">Kategorie</div>
<svg style="left:41px;top:432px" width="8" height="4" viewBox="0 0 8 4"><path d="M0 4H8L4 0Z" fill="#2a4564"/></svg>
<div class="t " style="left:228px;top:420px;">Kennung</div>
<div class="t " style="left:228px;top:434px;">Fachbezeichnung</div>
<div class="t " style="left:685px;top:427px;">Art</div>
<div class="t " style="left:821px;top:427px;">Bereich</div>
<div class="t " style="left:938px;top:427px;">Unterbereich</div>
<div class="t " style="left:1040px;top:420px;">Gewicht</div>
<div class="t " style="left:1040px;top:434px;">D1</div>
<div class="t " style="left:1085px;top:420px;">Gewicht</div>
<div class="t " style="left:1085px;top:434px;">D2</div>
<div class="t " style="left:1130px;top:420px;">Gewicht</div>
<div class="t " style="left:1130px;top:434px;">D3</div>
<div class="t " style="left:1175px;top:420px;">Gewicht</div>
<div class="t " style="left:1175px;top:434px;">D4</div>
<div class="t " style="left:1220px;top:420px;">Gewicht</div>
<div class="t " style="left:1220px;top:434px;">D5</div>
<div class="t " style="left:1265px;top:420px;">Bezeichnung</div>
<div class="t " style="left:1265px;top:434px;">Zeugnis</div>
<div class="t " style="left:1366px;top:420px;">Notenformat</div>
<div class="t " style="left:1366px;top:434px;">(Erfassung)</div>
<div class="t " style="left:1438px;top:420px;">Notenformat</div>
<div class="t " style="left:1438px;top:434px;width:71px;overflow:hidden">(Zeugnisdruck)</div>
<div class="t " style="left:1510px;top:420px;">Zeugnis-</div>
<div class="t " style="left:1510px;top:434px;">ausgabe</div>
<div class="a" style="left:1567px;top:417px;width:17px;height:34px;border:1px solid #1f4682;border-radius:3px;background:linear-gradient(#f6f7fe 0%,#f1f2fb 55%,#d6d8e6 75%,#cdd0e0 100%)"></div>
<svg style="left:1571px;top:428px" width="11" height="10" viewBox="0 0 11 10"><path d="M3 8.5H0.5V0.5H8.5V5.5M0.5 2.5H8.5M4.5 0.5V5.2" fill="none" stroke="#111" stroke-width="1"/><path d="M2.8 6H10.2L6.5 9.7Z" fill="#000"/></svg>
<div class="a" style="left:1570px;top:453px;width:12px;height:14px;background:linear-gradient(#fdfdff,#e2e2e6)"></div>
<svg style="left:1571px;top:457px" width="11" height="8" viewBox="0 0 11 8"><path d="M1 6L5.25 1.7L9.5 6" fill="none" stroke="#cfcfd2" stroke-width="2.1"/></svg>
<div class="redbox" style="left:680px;top:647px;width:143px;height:58px"></div>
</body></html>
